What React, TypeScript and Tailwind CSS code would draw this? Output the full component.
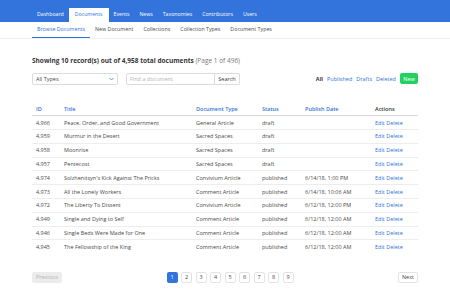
import React from 'react'

const mainNav = ['Dashboard', 'Documents', 'Events', 'News', 'Taxonomies', 'Contributors', 'Users']
const subNav = ['Browse Documents', 'New Document', 'Collections', 'Collection Types', 'Document Types']

const rows = [
  ['4,966', 'Peace, Order, and Good Government', 'General Article', 'draft', ''],
  ['4,959', 'Murmur in the Desert', 'Sacred Spaces', 'draft', ''],
  ['4,958', 'Moonrise', 'Sacred Spaces', 'draft', ''],
  ['4,957', 'Pentecost', 'Sacred Spaces', 'draft', ''],
  ['4,974', "Solzhenitsyn's Kick Against The Pricks", 'Convivium Article', 'published', '6/14/18, 1:00 PM'],
  ['4,973', 'All the Lonely Workers', 'Comment Article', 'published', '6/14/18, 10:06 AM'],
  ['4,972', 'The Liberty To Dissent', 'Convivium Article', 'published', '6/12/18, 12:00 PM'],
  ['4,949', 'Single and Dying to Self', 'Comment Article', 'published', '6/12/18, 12:00 AM'],
  ['4,946', 'Single Beds Were Made for One', 'Comment Article', 'published', '6/12/18, 12:00 AM'],
  ['4,945', 'The Fellowship of the King', 'Comment Article', 'published', '6/12/18, 12:00 AM'],
]

const App = () => {
  return (
    <div className="min-h-[300px] bg-white font-['Open_Sans',sans-serif] text-[5.5px] text-[#4a4a4a]">
      {/* top nav */}
      <div className="h-[22px] bg-[#3273dc]">
        <div className="mx-[32px] flex h-full items-end text-[5.2px]">
          {mainNav.map((item) => (
            <div
              key={item}
              className={
                item === 'Documents'
                  ? 'flex h-[14px] items-center bg-white px-[6px] text-[#3273dc]'
                  : 'flex h-[14px] items-center px-[5px] text-white'
              }
            >
              {item}
            </div>
          ))}
        </div>
      </div>

      {/* sub nav */}
      <div className="border-b border-[#f0f0f0]">
        <div className="mx-[32px] flex h-[16px] text-[5.3px]">
          {subNav.map((item, i) => (
            <div
              key={item}
              className={
                i === 0
                  ? 'flex items-center border-b-[1.5px] border-[#3273dc] px-[5px] text-[#3273dc]'
                  : 'flex items-center px-[5px] text-[#4a4a4a]'
              }
            >
              {item}
            </div>
          ))}
        </div>
      </div>

      <div className="mx-[32px]">
        <h1 className="mt-[17px] text-[6.5px] font-bold text-[#363636]">
          Showing 10 record(s) out of 4,958 total documents{' '}
          <span className="font-normal text-[#7a7a7a]">(Page 1 of 496)</span>
        </h1>

        {/* filters */}
        <div className="mt-[7px] flex items-center">
          <div className="flex h-[12px] w-[86px] items-center justify-between rounded-[2px] border border-[#dbdbdb] px-[3px]">
            <span>All Types</span>
            <svg width="5" height="4" viewBox="0 0 10 6" fill="none" stroke="#3273dc" strokeWidth="1.5">
              <path d="M1 1l4 4 4-4" />
            </svg>
          </div>
          <div className="ml-[8px] flex h-[12px] w-[89px] items-center rounded-l-[2px] border border-[#dbdbdb] px-[3px] text-[#b5b5b5]">
            Find a document
          </div>
          <div className="flex h-[12px] w-[25px] items-center justify-center rounded-r-[2px] border border-l-0 border-[#dbdbdb] text-[#363636]">
            Search
          </div>
          <div className="ml-auto flex items-center gap-[4px]">
            <span className="font-bold text-[#363636]">All</span>
            <span className="text-[#3273dc]">Published</span>
            <span className="text-[#3273dc]">Drafts</span>
            <span className="text-[#3273dc]">Deleted</span>
            <div className="flex h-[11px] w-[18px] items-center justify-center rounded-[2px] bg-[#23d160] text-white">New</div>
          </div>
        </div>

        {/* table */}
        <table className="mt-[18px] w-full border-collapse text-left">
          <thead>
            <tr className="h-[13px] border-b border-[#dbdbdb]">
              <th className="w-[28px] pl-[4px] font-semibold text-[#3273dc]">ID</th>
              <th className="w-[132px] pl-[4px] font-semibold text-[#3273dc]">Title</th>
              <th className="w-[66px] pl-[4px] font-semibold text-[#3273dc]">Document Type</th>
              <th className="w-[43px] pl-[4px] font-semibold text-[#3273dc]">Status</th>
              <th className="w-[70px] pl-[4px] font-semibold text-[#3273dc]">Publish Date</th>
              <th className="pl-[4px] font-semibold text-[#363636]">Actions</th>
            </tr>
          </thead>
          <tbody>
            {rows.map((r, i) => (
              <tr key={r[0]} className={i < rows.length - 1 ? 'h-[13.8px] border-b border-[#ededed]' : 'h-[13.8px]'}>
                <td className="pl-[4px]">{r[0]}</td>
                <td className="pl-[4px]">{r[1]}</td>
                <td className="pl-[4px]">{r[2]}</td>
                <td className="pl-[4px]">{r[3]}</td>
                <td className="pl-[4px]">{r[4]}</td>
                <td className="pl-[4px] text-[#3273dc]">Edit Delete</td>
              </tr>
            ))}
          </tbody>
        </table>

        {/* pagination */}
        <div className="mt-[18px] flex items-center">
          <div className="flex h-[11px] w-[30px] items-center justify-center rounded-[2px] bg-[#ececec] text-[#b5b5b5]">Previous</div>
          <div className="flex flex-1 justify-center gap-[3.5px]">
            {[1, 2, 3, 4, 5, 6, 7, 8, 9].map((n) => (
              <div
                key={n}
                className={
                  n === 1
                    ? 'flex h-[11px] w-[11px] items-center justify-center rounded-[2px] bg-[#3273dc] text-white'
                    : 'flex h-[11px] w-[11px] items-center justify-center rounded-[2px] border border-[#e3e3e3] text-[#4a4a4a]'
                }
              >
                {n}
              </div>
            ))}
          </div>
          <div className="flex h-[11px] w-[20px] items-center justify-center rounded-[2px] border border-[#e3e3e3] text-[#4a4a4a]">Next</div>
        </div>
      </div>
    </div>
  )
}

export default App
